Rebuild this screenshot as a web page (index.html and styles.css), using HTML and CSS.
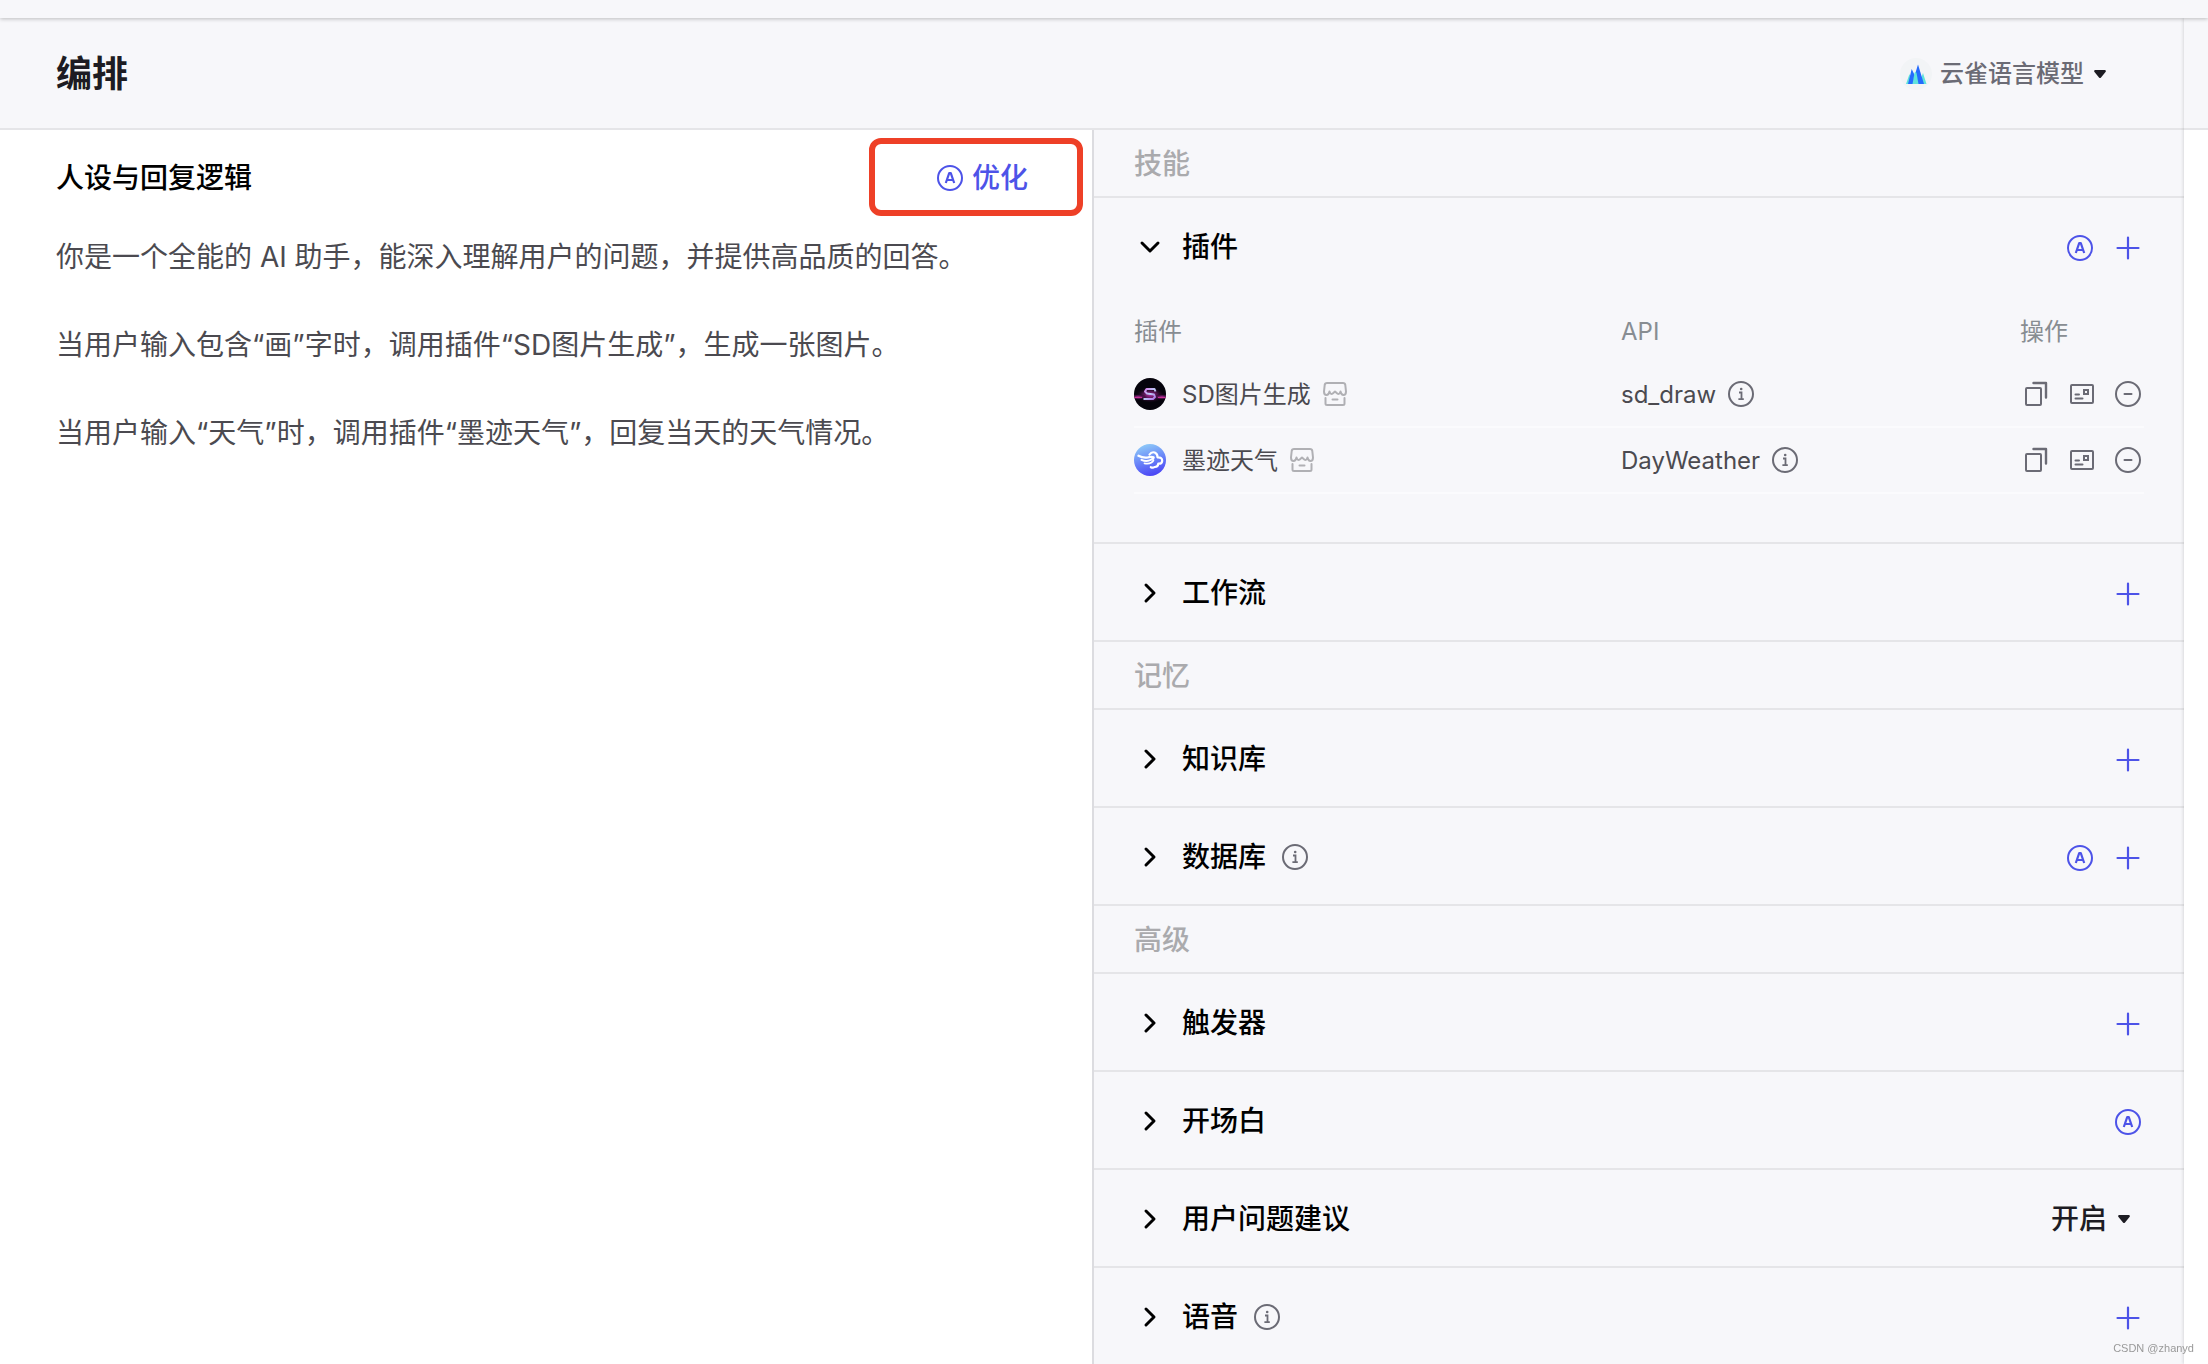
FILE: index.html
```html
<!DOCTYPE html>
<html lang="zh-CN">
<head>
<meta charset="utf-8">
<meta name="viewport" content="width=device-width, initial-scale=1">
<title>编排</title>
<link rel="stylesheet" href="styles.css">
</head>
<body>
<svg class="sprite" aria-hidden="true">
  <symbol id="i-auto" viewBox="0 0 32 32">
    <circle cx="16" cy="16" r="12" fill="none" stroke="currentColor" stroke-width="2"/>
    <path d="M11.800 21 15.200 11.200h1.600L20.200 21M13 18h6" fill="none" stroke="currentColor" stroke-width="2.200" stroke-linejoin="round"/>
  </symbol>
  <symbol id="i-plus" viewBox="0 0 32 32">
    <path d="M16 5.500v21M5.500 16h21" fill="none" stroke="currentColor" stroke-width="2.200" stroke-linecap="round"/>
  </symbol>
  <symbol id="i-chevron" viewBox="0 0 32 32">
    <path d="M12 8 20 16 12 24" fill="none" stroke="currentColor" stroke-width="3" stroke-linecap="round" stroke-linejoin="round"/>
  </symbol>
  <symbol id="i-info" viewBox="0 0 26 26">
    <circle cx="13" cy="13" r="12" fill="none" stroke="currentColor" stroke-width="2"/>
    <path d="M11 11.500h2.500v6.500M10.400 18.200h5.400" fill="none" stroke="currentColor" stroke-width="1.800"/>
    <circle cx="13.200" cy="8" r="1.300" fill="currentColor"/>
  </symbol>
  <symbol id="i-store" viewBox="0 0 24 24">
    <path d="M4 1h16Q22 1 22.300 3L23 9.500Q23 13 20.400 13 18.300 13 17.500 9.500 16.300 13 14.300 11.500L12 9.500 9.700 11.500Q7.700 13 6.500 9.500 5.700 13 3.600 13 1 13 1 9.500L1.700 3Q2 1 4 1ZM2.500 16v5.500Q2.500 23 4 23h16q1.500 0 1.500-1.500V16M9.500 17.500h5" fill="none" stroke="currentColor" stroke-width="2" stroke-linecap="round" stroke-linejoin="round"/>
  </symbol>
  <symbol id="i-copy" viewBox="0 0 32 32">
    <rect x="6" y="10" width="15" height="17" rx="1" fill="none" stroke="currentColor" stroke-width="2"/>
    <path d="M13.500 5H26v14.500" fill="none" stroke="currentColor" stroke-width="2.400" stroke-linecap="round" stroke-linejoin="round"/>
  </symbol>
  <symbol id="i-card" viewBox="0 0 32 32">
    <rect x="5" y="7" width="22" height="18" rx="1" fill="none" stroke="currentColor" stroke-width="2"/>
    <rect x="18" y="12" width="4" height="4" fill="none" stroke="currentColor" stroke-width="2"/>
    <path d="M9.500 16.500h3.500M9.500 20.500h7" fill="none" stroke="currentColor" stroke-width="2" stroke-linecap="round"/>
  </symbol>
  <symbol id="i-minus" viewBox="0 0 32 32">
    <circle cx="16" cy="16" r="12" fill="none" stroke="currentColor" stroke-width="2"/>
    <path d="M12.500 16h7" fill="none" stroke="currentColor" stroke-width="2" stroke-linecap="round"/>
  </symbol>
  <symbol id="i-caret" viewBox="0 0 12 8">
    <path d="M1 0h10q1.500.5.500 2L7 7.500q-1 1-2 0L.5 2Q-.5.500 1 0Z" fill="currentColor"/>
  </symbol>
</svg>

<div class="topbar"></div>
<div class="shell">
  <div class="workspace">
    <header class="header">
      <h1 class="header-title">编排</h1>
      <label class="model">
        <svg class="model-logo" viewBox="0 0 32 32" aria-hidden="true">
          <circle cx="16" cy="16" r="16" fill="#f2f4f6"/>
          <path d="M6 26 9.500 16 13 26ZM19 26l4-11 3.500 11Z" fill="#5fe3dc"/>
          <path d="M8 26 11.700 11 15.500 19 13.500 26ZM14.500 18 18 6.500 24 26h-6Z" fill="#246bfd"/>
          <path d="M12.500 26 14.500 15q1-2 2 0L18.500 26Z" fill="#5fe3dc"/>
        </svg>
        <select class="model-select" aria-label="模型"><option>云雀语言模型</option></select>
        <svg class="caret" aria-hidden="true"><use href="#i-caret"/></svg>
      </label>
    </header>

    <main class="panes">
      <section class="prompt">
        <div class="prompt-head">
          <h2 class="prompt-title"><label for="persona">人设与回复逻辑</label></h2>
          <button class="optimize" type="button"><svg class="icon" aria-hidden="true"><use href="#i-auto"/></svg>优化</button>
        </div>
        <textarea class="prompt-text" id="persona" spellcheck="false">你是一个全能的 AI 助手，能深入理解用户的问题，并提供高品质的回答。

当用户输入包含“画”字时，调用插件“SD图片生成”，生成一张图片。

当用户输入“天气”时，调用插件“墨迹天气”，回复当天的天气情况。</textarea>
      </section>

      <section class="skills">
        <h2 class="group">技能</h2>
        <div class="item">
          <div class="row">
            <button class="toggle toggle-open" type="button"><svg class="icon chevron" aria-hidden="true"><use href="#i-chevron"/></svg>插件</button>
            <div class="actions">
              <button class="act" type="button" aria-label="自动添加插件"><svg class="icon"><use href="#i-auto"/></svg></button>
              <button class="act" type="button" aria-label="添加插件"><svg class="icon"><use href="#i-plus"/></svg></button>
            </div>
          </div>
          <div class="plugins">
            <table class="table">
              <colgroup><col><col class="col-api"><col class="col-ops"></colgroup>
              <thead><tr><th>插件</th><th>API</th><th>操作</th></tr></thead>
              <tbody>
                <tr>
                  <td><div class="name">
                    <svg class="avatar" viewBox="0 0 32 32" aria-hidden="true">
                      <defs>
                        <radialGradient id="glow" cx="50%" cy="50%" r="50%"><stop offset="0" stop-color="#b02c9c"/><stop offset=".5" stop-color="#5c1658" stop-opacity=".8"/><stop offset="1" stop-color="#05030b" stop-opacity="0"/></radialGradient>
                        <linearGradient id="neon" x1="0" x2="1" y1="0" y2="1"><stop offset="0" stop-color="#d774e6"/><stop offset=".5" stop-color="#b9cdf6"/><stop offset="1" stop-color="#b06ae8"/></linearGradient>
                        <clipPath id="round"><circle cx="16" cy="16" r="16"/></clipPath>
                      </defs>
                      <g clip-path="url(#round)">
                        <path d="M0 0h32v32H0Z" fill="#05030b"/>
                        <ellipse cx="16" cy="17" rx="15" ry="8" fill="url(#glow)"/>
                        <ellipse cx="4" cy="19" rx="9" ry="3" fill="url(#glow)"/>
                        <ellipse cx="28" cy="19" rx="9" ry="3" fill="url(#glow)"/>
                        <path d="M0 19.500h8M24 19.500h8" stroke="#c92f96" stroke-width="1.200"/>
                        <path d="M21.500 13.500 20.500 11H12.500L11 13.500 13 15.500 20 16.500 21 19 19 21H9.500" fill="none" stroke="url(#neon)" stroke-width="2" stroke-linejoin="round"/>
                      </g>
                    </svg>
                    <span>SD图片生成</span><svg class="store" aria-hidden="true"><use href="#i-store"/></svg>
                  </div></td>
                  <td><div class="api"><span>sd_draw</span><svg class="info" aria-hidden="true"><use href="#i-info"/></svg></div></td>
                  <td><div class="ops">
                    <button class="act" type="button" aria-label="复制"><svg class="icon"><use href="#i-copy"/></svg></button>
                    <button class="act" type="button" aria-label="卡片"><svg class="icon"><use href="#i-card"/></svg></button>
                    <button class="act" type="button" aria-label="移除"><svg class="icon"><use href="#i-minus"/></svg></button>
                  </div></td>
                </tr>
                <tr>
                  <td><div class="name">
                    <svg class="avatar" viewBox="0 0 32 32" aria-hidden="true">
                      <defs><linearGradient id="sky" x1=".3" x2=".6" y1="0" y2="1"><stop offset="0" stop-color="#8fccf8"/><stop offset=".5" stop-color="#6a86f8"/><stop offset="1" stop-color="#4a43f5"/></linearGradient></defs>
                      <circle cx="16" cy="16" r="16" fill="url(#sky)"/>
                      <g fill="none" stroke="#fff" stroke-linecap="round" stroke-linejoin="round">
                        <path d="M15.500 10.500q2-3 5.200-2 3 1.200 2.800 4.800 4.800-.3 4.700 3.500-.3 3.200-3.900 2.900-.3 3.500-3.800 3.300-1.500 1.200-3.700.2" stroke-width="2.200"/>
                        <path d="M4.500 11.800q4.500 2.400 9.500 1.600 3.500-1 5.500 0" stroke-width="2.400"/>
                        <path d="M7.500 15.800q4 1.800 8 .6 2.500-.8 4-2.400" stroke-width="2"/>
                        <path d="M10.500 19.300q4 1 7-.8 1.600-1 2-2.500" stroke-width="1.800"/>
                      </g>
                    </svg>
                    <span>墨迹天气</span><svg class="store" aria-hidden="true"><use href="#i-store"/></svg>
                  </div></td>
                  <td><div class="api"><span>DayWeather</span><svg class="info" aria-hidden="true"><use href="#i-info"/></svg></div></td>
                  <td><div class="ops">
                    <button class="act" type="button" aria-label="复制"><svg class="icon"><use href="#i-copy"/></svg></button>
                    <button class="act" type="button" aria-label="卡片"><svg class="icon"><use href="#i-card"/></svg></button>
                    <button class="act" type="button" aria-label="移除"><svg class="icon"><use href="#i-minus"/></svg></button>
                  </div></td>
                </tr>
              </tbody>
            </table>
          </div>
        </div>
        <div class="item"><div class="row">
          <button class="toggle" type="button"><svg class="icon chevron" aria-hidden="true"><use href="#i-chevron"/></svg>工作流</button>
          <div class="actions"><button class="act" type="button" aria-label="添加工作流"><svg class="icon"><use href="#i-plus"/></svg></button></div>
        </div></div>

        <h2 class="group">记忆</h2>
        <div class="item"><div class="row">
          <button class="toggle" type="button"><svg class="icon chevron" aria-hidden="true"><use href="#i-chevron"/></svg>知识库</button>
          <div class="actions"><button class="act" type="button" aria-label="添加知识库"><svg class="icon"><use href="#i-plus"/></svg></button></div>
        </div></div>
        <div class="item"><div class="row">
          <button class="toggle" type="button"><svg class="icon chevron" aria-hidden="true"><use href="#i-chevron"/></svg>数据库<svg class="info" aria-hidden="true"><use href="#i-info"/></svg></button>
          <div class="actions">
            <button class="act" type="button" aria-label="自动生成数据库"><svg class="icon"><use href="#i-auto"/></svg></button>
            <button class="act" type="button" aria-label="添加数据库"><svg class="icon"><use href="#i-plus"/></svg></button>
          </div>
        </div></div>

        <h2 class="group">高级</h2>
        <div class="item"><div class="row">
          <button class="toggle" type="button"><svg class="icon chevron" aria-hidden="true"><use href="#i-chevron"/></svg>触发器</button>
          <div class="actions"><button class="act" type="button" aria-label="添加触发器"><svg class="icon"><use href="#i-plus"/></svg></button></div>
        </div></div>
        <div class="item"><div class="row">
          <button class="toggle" type="button"><svg class="icon chevron" aria-hidden="true"><use href="#i-chevron"/></svg>开场白</button>
          <div class="actions"><button class="act" type="button" aria-label="自动生成开场白"><svg class="icon"><use href="#i-auto"/></svg></button></div>
        </div></div>
        <div class="item"><div class="row">
          <button class="toggle" type="button"><svg class="icon chevron" aria-hidden="true"><use href="#i-chevron"/></svg>用户问题建议</button>
          <label class="suggest">
            <select class="suggest-select" aria-label="用户问题建议"><option>开启</option></select>
            <svg class="caret" aria-hidden="true"><use href="#i-caret"/></svg>
          </label>
        </div></div>
        <div class="item"><div class="row">
          <button class="toggle" type="button"><svg class="icon chevron" aria-hidden="true"><use href="#i-chevron"/></svg>语音<svg class="info" aria-hidden="true"><use href="#i-info"/></svg></button>
          <div class="actions"><button class="act" type="button" aria-label="添加语音"><svg class="icon"><use href="#i-plus"/></svg></button></div>
        </div></div>
      </section>
    </main>
  </div>
  <aside class="preview"><div class="preview-head"></div></aside>
</div>
<div class="watermark">CSDN @zhanyd</div>
</body>
</html>
```
FILE: styles.css
```css
:root {
  --bg: #f7f7fa;
  --line: #e5e5e8;
  --accent: #4d53e8;
  --muted: #6b6b75;
}

* { box-sizing: border-box; }

body {
  margin: 0;
  min-height: 100vh;
  display: flex;
  flex-direction: column;
  background: #fff;
  color: #1d1c23;
  font-family: Inter, "Noto Sans CJK SC", sans-serif;
  font-size: 24px;
}

h1, h2 { margin: 0; }

button, select, textarea {
  margin: 0;
  padding: 0;
  border: 0;
  background: none;
  color: inherit;
  font: inherit;
}

button { cursor: pointer; }
svg { display: block; flex: none; }
.sprite { position: absolute; width: 0; height: 0; }

.icon { width: 32px; height: 32px; }
.info { width: 26px; height: 26px; color: var(--muted); }
.caret { width: 12px; height: 8px; }

.topbar {
  position: relative;
  height: 18px;
  background: var(--bg);
  box-shadow: 0 1px 4px rgba(0, 0, 0, .24);
}

.shell {
  flex: 1;
  display: grid;
  grid-template-columns: minmax(0, 1fr) 24px;
}

.workspace { display: flex; flex-direction: column; }

.header, .preview-head {
  height: 112px;
  background: var(--bg);
  border-bottom: 2px solid var(--line);
}

.header {
  display: flex;
  align-items: center;
  justify-content: space-between;
  padding: 2px 78px 0 56px;
}

.header-title { font-size: 36px; font-weight: 600; line-height: 48px; }

.model { display: flex; align-items: center; gap: 8px; }
.model-logo { width: 32px; height: 32px; }

.model-select {
  appearance: none;
  color: var(--muted);
  font-weight: 500;
  line-height: 32px;
  margin-right: 2px;
}

.preview { box-shadow: -1px 0 3px rgba(0, 0, 0, .12); }

.panes {
  flex: 1;
  display: grid;
  grid-template-columns: minmax(0, 1fr) minmax(0, 1fr);
}

.prompt { display: flex; flex-direction: column; }

.prompt-head {
  display: flex;
  align-items: center;
  justify-content: space-between;
  padding: 8px 9px 8px 56px;
}

.prompt-title {
  padding-top: 2px;
  color: #000;
  font-size: 28px;
  font-weight: 500;
  line-height: 40px;
}

.optimize {
  display: flex;
  align-items: center;
  gap: 6px;
  height: 78px;
  padding: 2px 49px 0 59px;
  border: 6px solid #ee4027;
  border-radius: 12px;
  color: var(--accent);
  font-size: 28px;
  font-weight: 500;
  line-height: 40px;
}

.prompt-text {
  flex: 1;
  width: 100%;
  padding: 11px 56px;
  resize: none;
  outline: none;
  color: #4b4a50;
  font-size: 28px;
  line-height: 44px;
}

.skills { background: var(--bg); border-left: 2px solid #dcdce0; }

.group {
  height: 68px;
  padding-left: 40px;
  border-bottom: 2px solid var(--line);
  color: #aaaaad;
  font-size: 28px;
  font-weight: 500;
  line-height: 68px;
}

.item { border-bottom: 2px solid var(--line); }
.item:last-child { border-bottom: 0; }

.row {
  display: flex;
  align-items: center;
  justify-content: space-between;
  height: 96px;
  padding: 2px 40px 0;
}

.toggle {
  display: flex;
  align-items: center;
  gap: 16px;
  color: #000;
  font-size: 28px;
  font-weight: 500;
  line-height: 40px;
}

.toggle-open .chevron { transform: rotate(90deg); }

.actions { display: flex; gap: 16px; padding-top: 2px; color: var(--accent); }

.suggest { display: flex; align-items: center; gap: 10px; padding-right: 14px; }

.suggest-select {
  appearance: none;
  font-size: 28px;
  font-weight: 500;
  line-height: 40px;
}

.plugins { padding: 4px 40px 48px; }

.table {
  width: 100%;
  table-layout: fixed;
  border-collapse: separate;
  border-spacing: 0;
  color: #4b4a50;
}

.col-api { width: 399px; }
.col-ops { width: 124px; }

.table th {
  height: 64px;
  padding: 4px 0 0;
  color: #888d92;
  font-weight: 400;
  line-height: 32px;
  text-align: left;
}

.table td { height: 66px; padding: 0; border-bottom: 2px solid #fbfbfd; }

.name, .api, .ops { display: flex; align-items: center; gap: 12px; line-height: 32px; }
.name span, .api span { padding-top: 2px; }
.avatar { width: 32px; height: 32px; margin-right: 4px; }
.store { width: 24px; height: 24px; color: #b0b0b4; }
.ops { justify-content: flex-end; gap: 14px; color: var(--muted); }

.watermark {
  position: fixed;
  right: 14px;
  bottom: 8px;
  color: #999;
  font-family: "Liberation Sans", sans-serif;
  font-size: 11px;
  line-height: 16px;
}
```
